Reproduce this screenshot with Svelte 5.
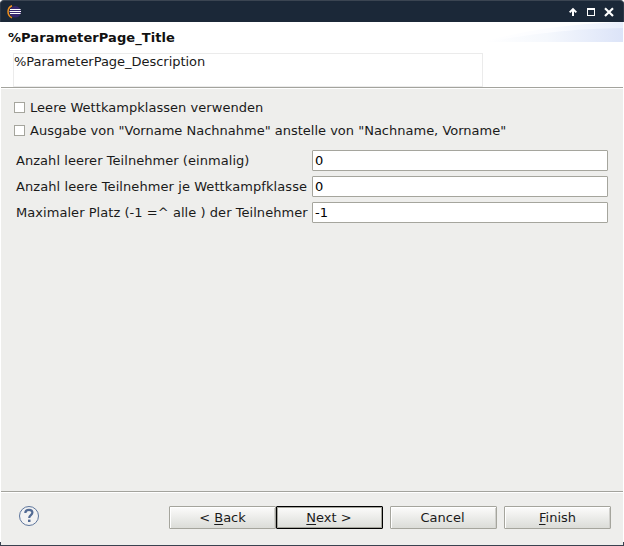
<script>
  const checks = [
    'Leere Wettkampklassen verwenden',
    'Ausgabe von "Vorname Nachnahme" anstelle von "Nachname, Vorname"'
  ];
  const fields = [
    { label: 'Anzahl leerer Teilnehmer (einmalig)', value: '0' },
    { label: 'Anzahl leere Teilnehmer je Wettkampfklasse', value: '0' },
    { label: 'Maximaler Platz (-1 =^ alle ) der Teilnehmer', value: '-1' }
  ];
</script>

<div class="window">
  <header class="titlebar">
    <svg class="logo" width="16" height="16" viewBox="0 0 16 16">
      <path d="M5 .8C-.3 3-.3 10.6 5 12.8" fill="none" stroke="#ef8f1d" stroke-width="1.5" />
      <circle cx="8.2" cy="6.8" r="5.8" fill="#37286d" />
      <path d="M3 4.5H13.6M2.6 6.5H14M3 8.5H13.6" stroke="#fff" stroke-width="1.1" />
    </svg>
    <svg class="controls" width="48" height="14" viewBox="0 0 48 14">
      <path d="M6 11V4.5M2.7 7.4L6 4.1L9.3 7.4" fill="none" stroke="#fff" stroke-width="2" />
      <path d="M20 3h8v8h-8zM21 5v5h6V5z" fill="#fff" fill-rule="evenodd" shape-rendering="crispEdges" />
      <path d="M38 3.3L46 11M46 3.3L38 11" fill="none" stroke="#fff" stroke-width="2.2" />
    </svg>
  </header>
  <section class="heading">
    <svg class="wave" width="153" height="20" viewBox="0 0 153 20">
      <defs>
        <linearGradient id="fade"><stop offset="0" stop-color="#fff" /><stop offset=".45" stop-color="#f5f8fd" /><stop offset="1" stop-color="#dce4f8" /></linearGradient>
        <linearGradient id="glow"><stop offset="0" stop-color="#fff" /><stop offset=".5" stop-color="#fbfcff" /><stop offset="1" stop-color="#e9effc" /></linearGradient>
      </defs>
      <path d="M10 20C60 8 95 2 153 0V20Z" fill="url(#glow)" />
      <path d="M14 20C65 12 95 7 153 6V20Z" fill="url(#fade)" />
    </svg>
    <h1>%ParameterPage_Title</h1>
    <div class="description">%ParameterPage_Description</div>
  </section>
  <main>
    <div class="checks">
      {#each checks as text}
        <div class="check"><i></i><span>{text}</span></div>
      {/each}
    </div>
    <div class="fields">
      {#each fields as f}
        <div class="row"><span class="label">{f.label}</span><div class="field">{f.value}</div></div>
      {/each}
    </div>
  </main>
  <footer>
    <svg class="help" width="22" height="22" viewBox="0 0 22 22">
      <circle cx="11" cy="11" r="9.5" fill="#f3f3f3" stroke="#5d759c" />
      <path d="M7.3 8C7.4 5.7 9 4.9 11 4.9C13.2 4.9 14.4 6 14.4 7.6C14.4 10 11.2 10.2 11.2 13" fill="none" stroke="#536b94" stroke-width="2.2" />
      <rect x="10" y="14.6" width="2.5" height="2.4" fill="#536b94" />
    </svg>
    <div class="buttons">
      <div class="button">&lt;&nbsp;<u>B</u>ack</div>
      <div class="button default"><u>N</u>ext &gt;</div>
      <div class="button gap cancel">Cancel</div>
      <div class="button gap"><u>F</u>inish</div>
    </div>
  </footer>
</div>

<style>
  :global(body) { background: #fff; }
  .window {
    box-sizing: border-box;
    width: 624px;
    height: 546px;
    display: flex;
    flex-direction: column;
    background: linear-gradient(#3a4250, #3a4250) 0 100% / 100% 1px no-repeat,
      linear-gradient(#3a4250, #3a4250) 0 100% / 1px 4px no-repeat,
      linear-gradient(#3a4250, #3a4250) 100% 100% / 1px 4px no-repeat, #fff;
    padding-bottom: 1px;
    font: 13px/16px "DejaVu Sans", sans-serif;
    color: #1a1a1a;
    white-space: nowrap;
  }
  .titlebar {
    box-sizing: border-box;
    height: 22px;
    flex: none;
    display: flex;
    justify-content: space-between;
    padding: 4px 8px 0 6px;
    background: #1b2838;
    border-top: 1px solid #3b4552;
    border-left: 1px solid #2c3746;
    border-right: 1px solid #2c3746;
    border-radius: 4px 4px 0 0;
  }
  .heading {
    position: relative;
    box-sizing: border-box;
    height: 67px;
    flex: none;
    margin: 0 1px;
    padding: 8px 7px 0;
    background: #fff;
    border-bottom: 1px solid #fff;
    box-shadow: inset 0 -1px #a3a39d;
  }
  .wave { position: absolute; right: 0; top: 0; }
  h1 { position: relative; margin: 0; font-size: 13px; line-height: 16px; font-weight: bold; letter-spacing: .08px; color: #111; }
  .description {
    box-sizing: border-box;
    width: 470px;
    height: 34px;
    margin: 7px 0 0 5px;
    border: 1px solid #ebebeb;
    letter-spacing: -.03px;
  }
  main { flex: 1; margin: 0 1px; padding: 11px 14px 0 13px; background: #eeeeec; }
  .checks { display: grid; gap: 7px; }
  .check { height: 16px; display: flex; align-items: flex-start; gap: 5px; }
  .check:first-child { letter-spacing: .04px; }
  .check i { box-sizing: border-box; width: 11px; height: 11px; margin-top: 2px; border: 1px solid #a5a59d; background: #fff; }
  .fields { display: grid; gap: 5px; margin-top: 11px; padding-left: 2px; }
  .row { display: flex; height: 21px; line-height: 21px; }
  .label { width: 296px; flex: none; letter-spacing: .05px; }
  .row:nth-child(2) .label { letter-spacing: .08px; }
  .field {
    box-sizing: border-box;
    width: 296px;
    height: 21px;
    line-height: 19px;
    padding-left: 2px;
    border: 1px solid #a5a59d;
    border-radius: 1px;
    background: #fff;
    color: #000;
  }
  footer {
    box-sizing: border-box;
    height: 54px;
    flex: none;
    display: flex;
    justify-content: space-between;
    margin: 0 1px;
    padding: 13px 12px 0 17px;
    background: #eeeeec;
    border-top: 1px solid #a3a39d;
    box-shadow: inset 0 1px #fff;
  }
  .buttons { display: flex; padding-top: 1px; }
  .button {
    box-sizing: border-box;
    width: 107px;
    height: 23px;
    line-height: 21px;
    text-align: center;
    border: 1px solid #a5a59d;
    border-radius: 1px;
    background: linear-gradient(#fcfcfb, #dbdcd8);
    box-shadow: inset 1px 1px #fff, inset -1px 0 #d0d0cc;
  }
  .default { border-color: #000; box-shadow: inset 0 0 0 1px #a5a59d; padding-right: 1px; }
  .cancel { padding-right: 2px; }
  .gap { margin-left: 7px; }
  u { text-underline-offset: 2px; text-decoration-thickness: 1px; text-decoration-skip-ink: none; }
</style>
